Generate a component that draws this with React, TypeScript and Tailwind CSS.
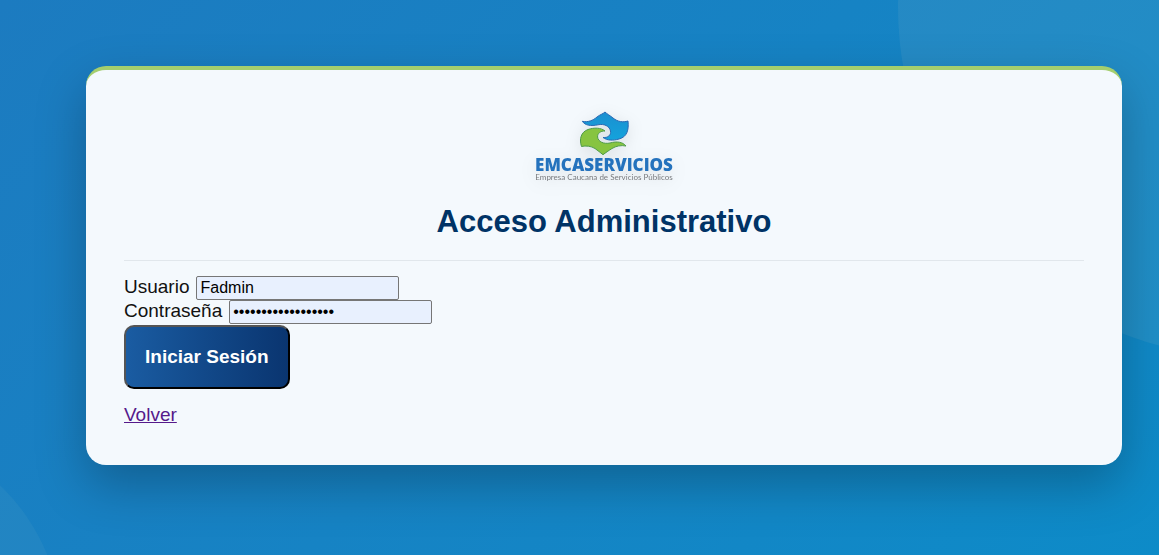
function Logo() {
  return (
    <svg
      viewBox="0 0 140 80"
      role="img"
      aria-label="EMCASERVICIOS, Empresa Caucana de Servicios Públicos"
      className="h-20 w-[140px] overflow-visible drop-shadow-[0_4px_8px_rgba(0,0,0,0.1)]"
    >
      <defs>
        <linearGradient id="wave-blue" x1="0" y1="0" x2="0" y2="1">
          <stop offset="0" stopColor="#1b8fd0" />
          <stop offset="1" stopColor="#14a3dc" />
        </linearGradient>
      </defs>
      <path
        d="M48.3 15.3 C54 16.5 59 14.5 63 11 C66 8.5 69 8 71 6 C73 8 76 9.5 79 12 C84 16 89 16.5 94 15 C95 24 93 31 85 33 C79 34.8 73 34.5 69 31.5 C74 32 77.3 29 76.5 25 C75.5 20 70 17.5 64 18.8 C57 20.3 51 19.5 48.3 15.3Z"
        fill="url(#wave-blue)"
        stroke="#2867b2"
        strokeWidth="1"
        strokeLinejoin="round"
      />
      <path
        d="M92 40 C87 39 82 40 78 42.5 C74 45 72 46.5 69 48.7 C66 46.5 64 44.5 61 42.5 C57 40 52 39.5 47.5 40.5 C45 33 47 26 54 23.5 C60 21.5 67 21.5 71 25 C66.5 24.8 63.3 27.5 63.6 31 C64 35.8 70 38.3 76 37 C83 35 89 36 92 40Z"
        fill="#87c440"
        stroke="#4d9a47"
        strokeWidth="1"
        strokeLinejoin="round"
      />
      <text
        x="70"
        y="65"
        textAnchor="middle"
        fill="#2472bd"
        className="font-['Open_Sans',sans-serif] text-[17px] font-extrabold"
      >
        EMCASERVICIOS
      </text>
      <text
        x="70"
        y="74"
        textAnchor="middle"
        fill="#77797d"
        className="font-[Lato,sans-serif] text-[8px]"
      >
        Empresa Caucana de Servicios Públicos
      </text>
    </svg>
  );
}

const inputClass =
  "h-6 w-[203px] rounded-[2px] border border-[#767676] bg-[#e8f0fe] px-[3px] text-base text-black";

export default function App() {
  return (
    <div className="relative isolate min-h-screen overflow-hidden bg-linear-135 from-[#1c7bc0] to-[#0d8bc8] py-[66px] pr-[37px] pl-[86px] font-['Liberation_Sans',Arial,sans-serif] text-[19px] leading-6 text-[#111]">
      <div className="absolute -top-[343px] left-[898px] -z-10 size-[700px] rounded-full bg-[#a0c0c8]/11" />
      <div className="absolute top-[430px] -left-[338px] -z-10 size-[400px] rounded-full bg-[#a0c0c8]/7" />

      <main className="rounded-[20px] border-t-4 border-[#a4ce6e] bg-[#f4f9fd] px-[38px] pt-9 pb-[38px] shadow-[0_20px_50px_rgba(0,0,0,0.25)]">
        <header className="flex flex-col items-center border-b border-[#e1e7ec] pb-[18px]">
          <Logo />
          <h1 className="mt-4 text-[31px] leading-10 font-bold text-[#003366]">
            Acceso Administrativo
          </h1>
        </header>

        <form className="mt-[15px]" onSubmit={(event) => event.preventDefault()}>
          <div className="flex items-start gap-[7px]">
            <label htmlFor="username" className="leading-[22px]">Usuario</label>
            <input id="username" type="text" defaultValue="Fadmin" className={inputClass} />
          </div>
          <div className="flex items-start gap-[7px]">
            <label htmlFor="password" className="leading-[22px]">Contraseña</label>
            <input
              id="password"
              type="password"
              defaultValue="administrador12345"
              className={inputClass}
            />
          </div>
          <button
            type="submit"
            className="mt-px h-16 rounded-[10px] border-2 border-t-[#555] border-r-black border-b-black border-l-[#555] bg-linear-to-r from-[#1a5ca2] to-[#0a3570] px-[19px] text-[19px] font-bold text-white"
          >
            Iniciar Sesión
          </button>
        </form>

        <div className="mt-[14px]">
          <a href="#volver" className="text-[#551a8b] underline">
            Volver
          </a>
        </div>
      </main>
    </div>
  );
}
